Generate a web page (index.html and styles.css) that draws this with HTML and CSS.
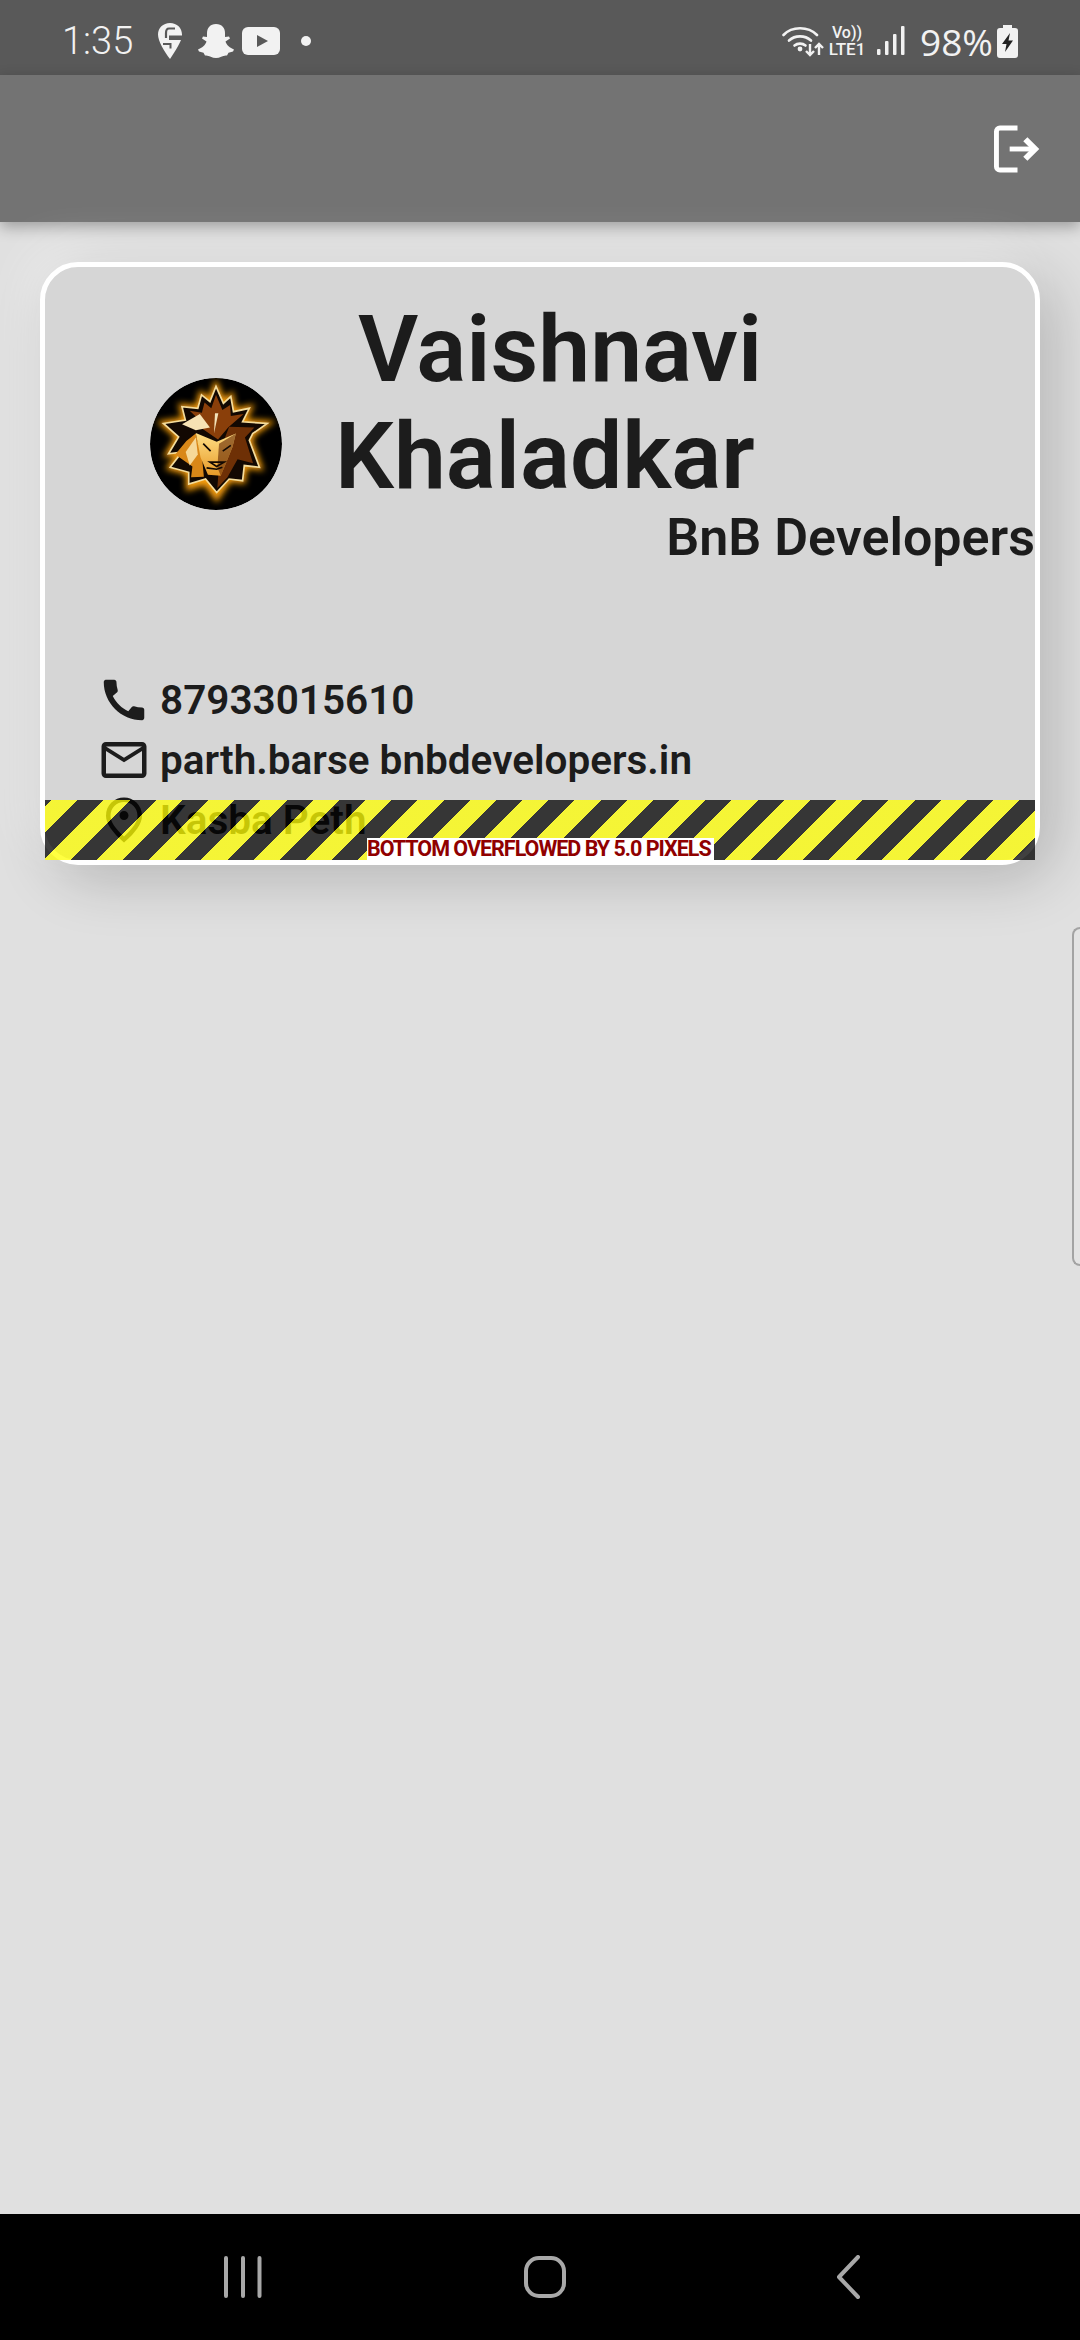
FILE: index.html
```html
<!DOCTYPE html>
<html>
<head>
    <meta charset="UTF-8">
    <title>Business card</title>
    <link rel="stylesheet" href="styles.css">
</head>
<body>
    <div class="status-bar">
        <div class="status-left">
            <span class="time">1:35</span>
            <svg class="ic-swiggy" viewBox="0 0 24 36"><path fill="#f2f2f2" d="M12 0C5 0 0 5 0 11.500C0 18 6 28 12 36C16 30 21 22 23 17H11V12.500H24C24 12 24 11.800 24 11.500C24 5 19 0 12 0Z"/><path fill="none" stroke="#595959" stroke-width="2.200" d="M17 5.500H11C8.500 5.500 8 8 8 10V15"/><path fill="none" stroke="#595959" stroke-width="2" d="M5 21H12.500V25.500"/></svg>
            <svg class="ic-snap" viewBox="0 0 36 34"><path fill="#f2f2f2" d="M18 0C24 0 27 4 27 9V13L31 12.500L32 14.500L27.500 17.500C28.500 21 32 24 36 25.500L35 27.500L30.500 28.800L29 31.500C25 30.800 22.500 34 18 34C13.500 34 11 30.800 7 31.500L5.500 28.800L1 27.500L0 25.500C4 24 7.500 21 8.500 17.500L4 14.500L5 12.500L9 13V9C9 4 12 0 18 0Z"/></svg>
            <svg class="ic-yt" viewBox="0 0 38 28"><rect width="38" height="28" rx="6" fill="#f2f2f2"/><path fill="#595959" d="M15 8V20L26 14Z"/></svg>
            <span class="dot"></span>
        </div>
        <div class="status-right">
            <svg class="ic-wifi" viewBox="0 0 42 32"><g fill="none" stroke="#f2f2f2" stroke-width="2.600" stroke-linecap="round"><path d="M1.500 10C10 1 26 1 35 10"/><path d="M7 15.500C13 10 23 10 29 15.500"/><path d="M12.500 20.500C15.500 18 20.500 18 23.500 20.500"/></g><circle cx="18" cy="24" r="2.400" fill="#f2f2f2"/><g fill="none" stroke="#f2f2f2" stroke-width="2.400"><path d="M28 19V30M24 26L28 30L32 26"/><path d="M37 30V19M33 23L37 19L41 23"/></g></svg>
            <div class="volte"><span class="vo">Vo))</span><span class="lte">LTE1</span></div>
            <svg class="ic-signal" viewBox="0 0 28 30"><g fill="#f2f2f2"><rect x="0" y="23" width="3.500" height="6" rx="1"/><rect x="8" y="15" width="3.500" height="14" rx="1"/><rect x="16" y="8" width="3.500" height="21" rx="1"/><rect x="24" y="0" width="3.500" height="29" rx="1"/></g></svg>
            <span class="battery-pct">98%</span>
            <svg class="ic-battery" viewBox="0 0 21 33"><path fill="#f2f2f2" d="M6 0H15V3H18C20 3 21 4 21 6V30C21 32 20 33 18 33H3C1 33 0 32 0 30V6C0 4 1 3 3 3H6Z"/><path fill="#222" d="M13 8L5 19H9.500L8 27L16 15.500H11.500Z"/></svg>
        </div>
    </div>

    <div class="app-bar">
        <svg class="ic-logout" viewBox="0 0 48 48"><g fill="none" stroke="#fff" stroke-width="5"><path d="M24 2.500H6C4 2.500 2.500 4 2.500 6V42C2.500 44 4 45.500 6 45.500H24"/><path d="M16 24H42"/><path d="M32 14L42 24L32 34" stroke-width="6"/></g></svg>
    </div>

    <div class="content">
        <div class="card">
            <div class="card-head">
                <svg class="avatar" viewBox="90 85 392 392">
                    <defs>
                        <filter id="glow" x="-20%" y="-20%" width="140%" height="140%"><feGaussianBlur stdDeviation="10"/></filter>
                        <linearGradient id="gold" x1="0" y1="0" x2="0" y2="1"><stop offset="0" stop-color="#ffdf86"/><stop offset="1" stop-color="#e79a28"/></linearGradient>
                    </defs>
                    <circle cx="286" cy="281" r="196" fill="#000"/>
                    <path fill="#f59c0c" stroke="#f59c0c" stroke-width="18" filter="url(#glow)" d="M286 110L308 160L330 140L338 185L385 175L365 215L438 220L395 250L385 270L415 350L370 345L365 390L325 385L288 440L255 395L205 410L205 365L150 350L185 305L145 310L175 260L130 220L195 210L185 170L232 175L243 135L268 155Z"/>
                    <path fill="#120802" stroke="#f4dc9c" stroke-width="5" d="M286 110L308 160L330 140L338 185L385 175L365 215L438 220L395 250L385 270L415 350L370 345L365 390L325 385L288 425L255 385L205 400L205 365L150 350L185 305L145 310L175 260L130 220L195 210L185 170L232 175L243 135L268 155Z"/>
                    <path fill="#8a3f0a" d="M286 135L305 180L328 165L330 198L368 192L322 232L292 268L240 232L200 215L232 205L208 182L244 188L252 158L272 175Z"/>
                    <path fill="#f6e2b4" d="M185 222L238 192L268 232L226 240Z"/>
                    <path fill="#6e3006" d="M325 230L400 232L372 262L396 338L350 326L320 380L290 412L298 300Z"/>
                    <path fill="#d98718" d="M165 312L198 272L226 250L245 325L250 378L212 380L216 348Z"/>
                    <path fill="#f6d898" d="M196 305L226 262L232 312L208 345Z"/>
                    <path fill="url(#gold)" d="M226 248L288 274L345 250L335 290L315 340L300 375L262 372L240 320Z"/>
                    <path fill="#6b2f08" d="M295 280L345 250L335 290L315 340L300 375L290 350Z" opacity=".65"/>
                    <path fill="none" stroke="#120802" stroke-width="5" d="M248 280L270 302M330 285L306 302M268 335H310L288 348ZM258 352L288 356L305 350"/>
                    <path fill="#f3e2b8" d="M283 190L293 190L280 250Z"/>
                </svg>
                <div class="name">
                    <div class="name-first">Vaishnavi</div>
                    <div>Khaladkar</div>
                </div>
            </div>
            <div class="company">BnB Developers</div>
            <div class="contacts">
                <div class="contact-row">
                    <svg viewBox="0 0 24 24"><path d="M20.010 15.380c-1.230 0-2.420-.2-3.530-.56-.35-.12-.74-.03-1.010.24l-1.570 1.970c-2.830-1.350-5.480-3.900-6.890-6.830l1.950-1.660c.27-.28.35-.67.24-1.020-.37-1.110-.56-2.300-.56-3.530 0-.54-.45-.99-.99-.99H4.190C3.650 3 3 3.240 3 3.990 3 13.280 10.730 21 20.010 21c.71 0 .99-.63.99-1.180v-3.450c0-.54-.45-.99-.99-.99z"/></svg>
                    <span>87933015610</span>
                </div>
                <div class="contact-row">
                    <svg viewBox="0 0 24 24"><path d="M20 4H4c-1.100 0-1.990.9-1.990 2L2 18c0 1.100.9 2 2 2h16c1.100 0 2-.9 2-2V6c0-1.100-.9-2-2-2zm0 14H4V8l8 5 8-5v10zm-8-7L4 6h16l-8 5z"/></svg>
                    <span>parth.barse bnbdevelopers.in</span>
                </div>
                <div class="contact-row">
                    <svg viewBox="0 0 24 24"><path d="M12 12c-1.100 0-2-.9-2-2s.9-2 2-2 2 .9 2 2-.9 2-2 2zm6-1.800C18 6.570 15.350 4 12 4s-6 2.570-6 6.200c0 2.340 1.950 5.440 6 9.140 4.050-3.700 6-6.800 6-9.140zM12 2c4.200 0 8 3.220 8 8.200 0 3.320-2.670 7.250-8 11.800-5.330-4.550-8-8.480-8-11.800C4 5.220 7.800 2 12 2z"/></svg>
                    <span>Kasba Peth</span>
                </div>
            </div>
            <div class="overflow-strip">
                <span class="overflow-label">BOTTOM OVERFLOWED BY 5.0 PIXELS</span>
            </div>
        </div>
        <div class="edge-handle"></div>
    </div>

    <div class="nav-bar">
        <svg class="nav-recent" viewBox="0 0 38 42"><g stroke="#a8a8a8" stroke-width="4" stroke-linecap="round"><path d="M2 2V40M19 2V40M35.500 2V40"/></g></svg>
        <svg class="nav-home" viewBox="0 0 42 42"><rect x="2" y="2" width="38" height="38" rx="13" fill="none" stroke="#a8a8a8" stroke-width="4"/></svg>
        <svg class="nav-back" viewBox="0 0 24 44"><path d="M22 2L3 22L22 42" fill="none" stroke="#a8a8a8" stroke-width="4" stroke-linecap="round" stroke-linejoin="round"/></svg>
    </div>
</body>
</html>
```

FILE: styles.css
```css
* {
    box-sizing: border-box;
}
body {
    margin: 0;
    width: 1080px;
    height: 2340px;
    display: flex;
    flex-direction: column;
    overflow: hidden;
    background: #e0e0e0;
    font-family: Roboto, sans-serif;
    color: #1c1c1c;
}
svg {
    display: block;
    flex-shrink: 0;
}

.status-bar {
    height: 75px;
    flex-shrink: 0;
    display: flex;
    justify-content: space-between;
    align-items: center;
    padding: 7px 62px 0;
    background: #595959;
    color: #f2f2f2;
}
.status-left, .status-right {
    display: flex;
    align-items: center;
}
.time {
    font-size: 38px;
    font-weight: 300;
    width: 89px;
    margin-right: 7px;
}
.ic-swiggy { width: 24px; height: 36px; margin-right: 16px; }
.ic-snap { width: 36px; height: 34px; margin-right: 8px; }
.ic-yt { width: 38px; height: 28px; margin-right: 21px; }
.dot {
    width: 10px;
    height: 10px;
    border-radius: 50%;
    background: #f2f2f2;
}
.ic-wifi { width: 42px; height: 32px; margin-right: 3px; }
.volte {
    width: 40px;
    display: flex;
    flex-direction: column;
    align-items: center;
    font-weight: 500;
    line-height: 16px;
    margin-right: 10px;
}
.vo { font-size: 16px; }
.lte { font-size: 17px; }
.ic-signal { width: 28px; height: 30px; margin-right: 15px; }
.battery-pct {
    font-family: "Open Sans", sans-serif;
    font-size: 37px;
    font-weight: 400;
    width: 77px;
}
.ic-battery { width: 21px; height: 33px; }

.app-bar {
    height: 147px;
    flex-shrink: 0;
    display: flex;
    justify-content: flex-end;
    align-items: center;
    padding-right: 39px;
    background: #737373;
    box-shadow: 0 5px 14px rgba(0, 0, 0, 0.3);
    position: relative;
}
.ic-logout { width: 47px; height: 48px; }

.content {
    flex: 1;
    position: relative;
    padding: 40px 40px 0;
}

.card {
    position: relative;
    height: 603px;
    border: 5px solid #fff;
    border-radius: 38px;
    background: #d6d6d6;
    box-shadow: 14px 14px 60px rgba(0, 0, 0, 0.2), -14px -14px 40px rgba(255, 255, 255, 0.45);
    display: flex;
    flex-direction: column;
}
.card-head {
    display: flex;
    align-items: flex-start;
    padding: 29px 0 0 105px;
}
.avatar {
    width: 132px;
    height: 132px;
    margin-top: 82px;
    border-radius: 50%;
}
.name {
    margin-left: 53px;
    font-size: 93px;
    font-weight: 650;
    line-height: 107px;
}
.name-first {
    margin-left: 23px;
}
.company {
    align-self: flex-end;
    margin-top: -2px;
    font-size: 52px;
    font-weight: 650;
    line-height: 59px;
}
.contacts {
    margin-top: 103px;
    padding-left: 52px;
}
.contact-row {
    height: 60px;
    display: flex;
    align-items: center;
    gap: 9px;
    font-size: 40.5px;
    font-weight: 650;
}
.contact-row svg {
    width: 54px;
    height: 54px;
    fill: #1c1c1c;
}

.overflow-strip {
    position: absolute;
    left: 0;
    right: 0;
    top: 533px;
    height: 60px;
    background: repeating-linear-gradient(135deg, rgba(255, 255, 0, 0.75) 4.7px 23.2px, rgba(0, 0, 0, 0.75) 23.2px 41.7px);
}
.overflow-label {
    position: absolute;
    left: 322px;
    bottom: 0;
    width: 347px;
    height: 22px;
    background: #fff;
    color: #900000;
    font-size: 21.5px;
    font-weight: 700;
    line-height: 22px;
    letter-spacing: -1px;
    white-space: nowrap;
}

.edge-handle {
    position: absolute;
    right: 0;
    top: 705px;
    width: 8px;
    height: 339px;
    border: 2px solid #a3a3a3;
    border-right: none;
    border-radius: 12px 0 0 12px;
    background: #e3e3e3;
}

.nav-bar {
    height: 126px;
    flex-shrink: 0;
    position: relative;
    background: #000;
}
.nav-recent, .nav-home, .nav-back {
    position: absolute;
}
.nav-recent { left: 224px; top: 42px; width: 38px; height: 42px; }
.nav-home { left: 524px; top: 42px; width: 42px; height: 42px; }
.nav-back { left: 836px; top: 41px; width: 24px; height: 44px; }
```
